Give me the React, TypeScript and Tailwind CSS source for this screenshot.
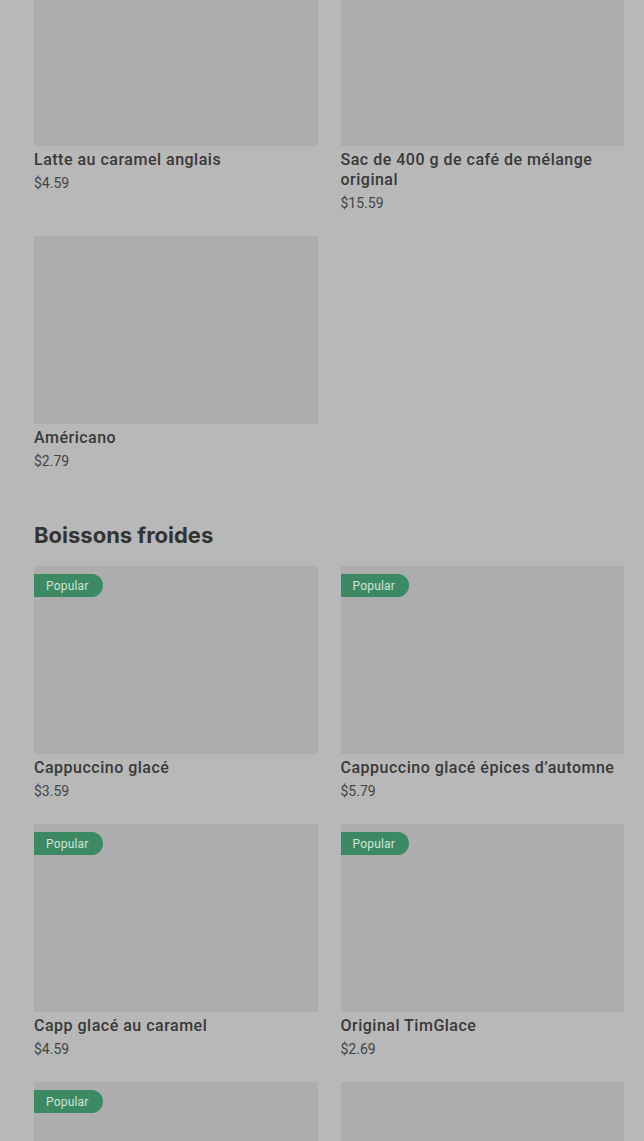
import React from "react";

type Item = { name?: string; price?: string; popular?: boolean };

const hot: Item[] = [
  { name: "Latte au caramel anglais", price: "$4.59" },
  { name: "Sac de 400 g de café de mélange original", price: "$15.59" },
  { name: "Américano", price: "$2.79" },
];

// last row is cut by the bottom of the screen, only the photos show
const cold: Item[] = [
  { name: "Cappuccino glacé", price: "$3.59", popular: true },
  { name: "Cappuccino glacé épices d’automne", price: "$5.79", popular: true },
  { name: "Capp glacé au caramel", price: "$4.59", popular: true },
  { name: "Original TimGlace", price: "$2.69", popular: true },
  { popular: true },
  {},
];

function Card({ item }: { item: Item }) {
  return (
    <div className="flex flex-col">
      <div className="relative h-[188px] bg-[#adadad]">
        {item.popular && (
          <span className="absolute left-0 top-[8px] flex h-[23px] items-center rounded-r-full bg-[#3c8a64] pl-[12px] pr-[14px] text-[12px] tracking-[0.2px] text-[#d2e4d8]">
            Popular
          </span>
        )}
      </div>
      {item.name && (
        <>
          <div className="mt-[4px] text-[16px] font-medium leading-5 tracking-[0.5px] text-[#383838]">
            {item.name}
          </div>
          <div className="mt-[4px] text-[14px] leading-[18px] text-[#444444]">{item.price}</div>
        </>
      )}
    </div>
  );
}

export default function App() {
  return (
    <div
      className="h-[1141px] overflow-hidden bg-[#b8b8b8]"
      style={{ fontFamily: "Roboto, 'Noto Sans', sans-serif" }}
    >
      <div className="-mt-[42px] pl-[34px] pr-[20px]">
        <div className="grid grid-cols-2 gap-x-[23px] gap-y-[24px]">
          {hot.map((item, i) => (
            <Card key={i} item={item} />
          ))}
        </div>

        <h2
          className="mt-[51px] mb-[17px] text-[22px] font-bold leading-7 text-[#333333]"
          style={{ fontFamily: "Inter, 'Noto Sans', sans-serif" }}
        >
          Boissons froides
        </h2>
        <div className="grid grid-cols-2 gap-x-[23px] gap-y-[24px]">
          {cold.map((item, i) => (
            <Card key={i} item={item} />
          ))}
        </div>
      </div>
    </div>
  );
}
